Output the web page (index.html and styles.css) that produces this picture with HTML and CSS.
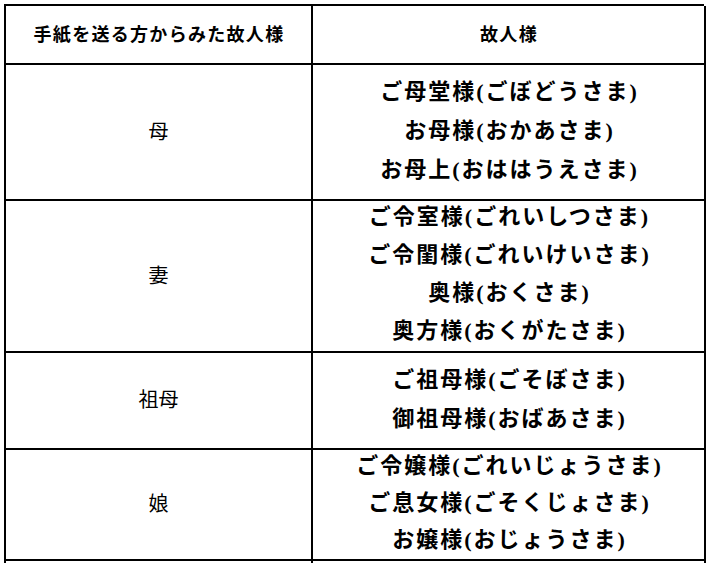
FILE: index.html
```html
<!DOCTYPE html>
<html lang="ja">
<head>
<meta charset="utf-8">
<title>故人様の敬称</title>
<link rel="stylesheet" href="styles.css">
</head>
<body>
<div class="sheet">
  <div class="cell head">手紙を送る方からみた故人様</div>
  <div class="cell head">故人様</div>

  <div class="cell rel">母</div>
  <div class="cell names">
    <div class="ln">ご母堂様(ごぼどうさま)</div>
    <div class="ln">お母様(おかあさま)</div>
    <div class="ln">お母上(おははうえさま)</div>
  </div>

  <div class="cell rel">妻</div>
  <div class="cell names tight">
    <div class="ln">ご令室様(ごれいしつさま)</div>
    <div class="ln">ご令閨様(ごれいけいさま)</div>
    <div class="ln">奥様(おくさま)</div>
    <div class="ln">奥方様(おくがたさま)</div>
  </div>

  <div class="cell rel">祖母</div>
  <div class="cell names">
    <div class="ln">ご祖母様(ごそぼさま)</div>
    <div class="ln">御祖母様(おばあさま)</div>
  </div>

  <div class="cell rel">娘</div>
  <div class="cell names tighter">
    <div class="ln">ご令嬢様(ごれいじょうさま)</div>
    <div class="ln">ご息女様(ごそくじょさま)</div>
    <div class="ln">お嬢様(おじょうさま)</div>
  </div>

  <div class="cell rel"></div>
  <div class="cell names"></div>
</div>
</body>
</html>
```

FILE: styles.css
```css
html, body {
  margin: 0;
  padding: 0;
  background: #ffffff;
}

body {
  padding: 4px 0 0 4px;
  color: #000000;
  font-family: "Liberation Serif", "Noto Sans CJK JP", serif;
}

.sheet {
  display: grid;
  grid-template-columns: 307px 393px;
  grid-template-rows: 59px 136px 152px 97px 111px 40px;
  width: 700px;
  box-sizing: border-box;
  border-top: 2px solid #000;
  border-left: 2px solid #000;
}

.cell {
  box-sizing: border-box;
  border-right: 2px solid #000;
  border-bottom: 2px solid #000;
  display: flex;
  flex-direction: column;
  align-items: center;
  justify-content: center;
  text-align: center;
  padding-bottom: 4px;
}

.head {
  font-size: 18px;
  font-weight: 700;
  letter-spacing: 1.3px;
  padding-left: 1px;
}

.rel {
  font-size: 20px;
  font-weight: 400;
}

.names {
  font-size: 22px;
  font-weight: 700;
  letter-spacing: 2px;
  padding-left: 2px;
}

.ln {
  line-height: 39px;
  white-space: nowrap;
}

.tight .ln {
  line-height: 38px;
}

.tighter .ln {
  line-height: 37px;
}
```
